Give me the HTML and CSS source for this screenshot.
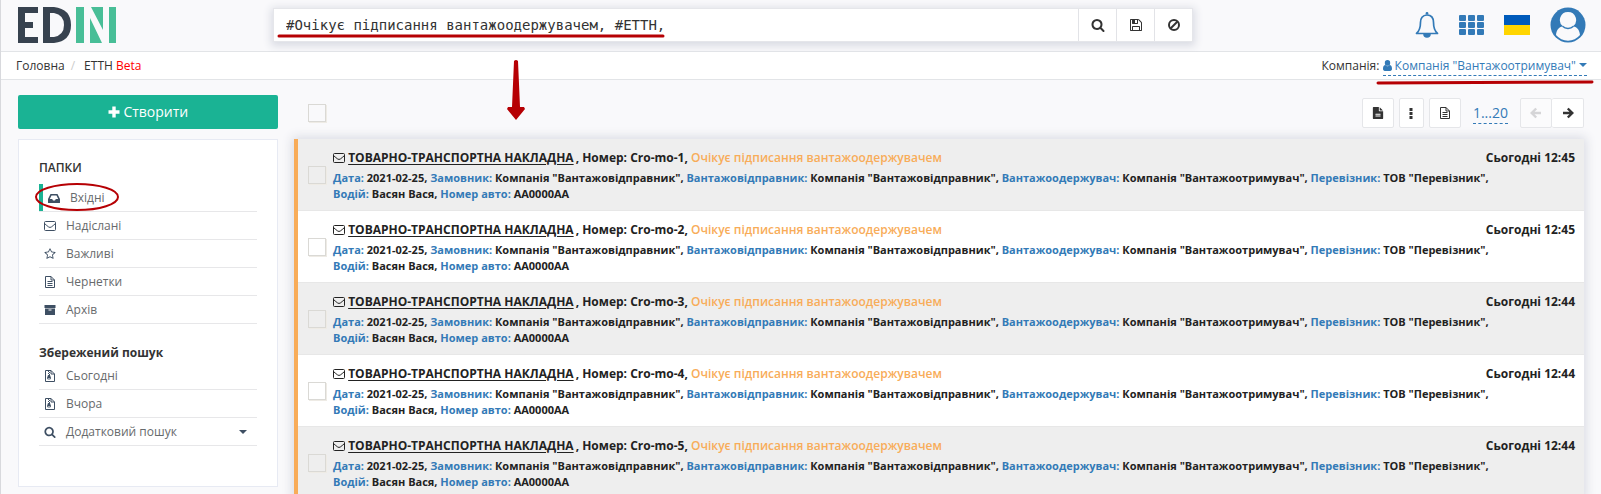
FILE: index.html
```html
<!DOCTYPE html>
<html lang="uk">
<head>
<meta charset="utf-8">
<title>EDIN — ЕТТН</title>
<link rel="stylesheet" href="styles.css">
<script src="app.js" defer></script>
</head>
<body>
<svg class="sprite" aria-hidden="true">
  <symbol id="i-search" viewBox="0 0 1792 1792"><path d="M1216 832q0-185-131.500-316.500t-316.500-131.500-316.500 131.500-131.500 316.500 131.500 316.500 316.500 131.500 316.500-131.500 131.500-316.500zm512 832q0 52-38 90t-90 38q-54 0-90-38l-343-342q-179 124-399 124-143 0-273.500-55.500t-225-150-150-225-55.500-273.500 55.500-273.500 150-225 225-150 273.500-55.500 273.500 55.500 225 150 150 225 55.500 273.500q0 220-124 399l343 343q37 37 37 90z"/></symbol>
  <symbol id="i-save" viewBox="0 0 1792 1792"><path d="M512 1536h768v-384h-768v384zm896 0h128v-896q0-14-10-38.500t-20-34.500l-281-281q-10-10-34-20t-39-10v416q0 40-28 68t-68 28h-576q-40 0-68-28t-28-68v-416h-128v1280h128v-416q0-40 28-68t68-28h832q40 0 68 28t28 68v416zm-384-928v-320q0-13-9.500-22.500t-22.500-9.500h-192q-13 0-22.500 9.500t-9.500 22.500v320q0 13 9.500 22.500t22.500 9.500h192q13 0 22.500-9.500t9.500-22.500zm640 32v928q0 40-28 68t-68 28h-1344q-40 0-68-28t-28-68v-1344q0-40 28-68t68-28h928q40 0 88 20t76 48l280 280q28 28 48 76t20 88z"/></symbol>
  <symbol id="i-ban" viewBox="0 0 14 14"><circle cx="7" cy="7" r="5" fill="none" stroke="currentColor" stroke-width="2"/><path d="M3.500 10.500l7-7" stroke="currentColor" stroke-width="2"/></symbol>
  <symbol id="i-bell" viewBox="0 0 24 28"><path d="M12 4c-4.600 0-6.500 3.400-6.500 7.300 0 5.700-1.500 9-4 11.200h21c-2.500-2.200-4-5.500-4-11.200C18.500 7.400 16.600 4 12 4z" fill="none" stroke="currentColor" stroke-width="1.700" stroke-linejoin="round"/><path d="M10.600 3.500V2.400a1.400 1.400 0 0 1 2.800 0v1.100zM8.200 23h7.600a3.800 3.800 0 0 1-7.600 0z"/></symbol>
  <symbol id="i-user" viewBox="0 0 10 12"><path d="M5 0a3 3.200 0 0 1 0 6.400A3 3.200 0 0 1 5 0zM2.300 5.400a3.800 3.800 0 0 0 5.400 0C9.400 5.700 10 7.500 10 9.700 10 11.200 9.200 12 8 12H2c-1.200 0-2-.8-2-2.300 0-2.200.6-4 2.300-4.300z"/></symbol>
  <symbol id="i-plus" viewBox="0 0 12 12"><path d="M4.300.5h3.400v3.800h3.800v3.400H7.700v3.800H4.300V7.700H.5V4.300h3.800z"/></symbol>
  <symbol id="i-doc" viewBox="0 0 1792 1792"><path d="M1596 476q14 14 28 36h-472v-472q22 14 36 28zm-476 164h544v1056q0 40-28 68t-68 28h-1344q-40 0-68-28t-28-68v-1600q0-40 28-68t68-28h800v544q0 40 28 68t68 28zm160 736v-64q0-14-9-23t-23-9h-704q-14 0-23 9t-9 23v64q0 14 9 23t23 9h704q14 0 23-9t9-23zm0-256v-64q0-14-9-23t-23-9h-704q-14 0-23 9t-9 23v64q0 14 9 23t23 9h704q14 0 23-9t9-23z"/></symbol>
  <symbol id="i-doc-o" viewBox="0 0 12 12"><path d="M1.500.5h5.500l3.500 3.500v7.500h-9zM7 .5V4h3.500M3.500 5.500h5M3.500 7.500h5M3.500 9.500h5" fill="none" stroke="currentColor" stroke-linejoin="round"/></symbol>
  <symbol id="i-zip" viewBox="0 0 12 12"><path d="M1.500.5h5.500l3.500 3.500v7.500h-9zM7 .5V4h3.500" fill="none" stroke="currentColor" stroke-linejoin="round"/><path d="M4 1h1v1H4zM5 2h1v1H5zM4 3h1v1H4zM5 4h1v1H5zM4 5h2l1 3a2 1.500 0 1 1-4 0zM4.300 8.200v.9h1.400v-.9z" fill-rule="evenodd"/></symbol>
  <symbol id="i-dots" viewBox="0 0 12 12"><path d="M4.500 1h3v3h-3zM4.500 5h3v3h-3zM4.500 9h3v3h-3z"/></symbol>
  <symbol id="i-right" viewBox="0 0 12 12"><path d="M1 6h9M5.800 1.500L10.300 6l-4.500 4.500" fill="none" stroke="currentColor" stroke-width="2.400"/></symbol>
  <symbol id="i-left" viewBox="0 0 12 12"><path d="M11 6H2M6.200 1.500L1.700 6l4.500 4.500" fill="none" stroke="currentColor" stroke-width="2.400"/></symbol>
  <symbol id="i-inbox" viewBox="0 0 12 12"><path d="M2.500 2h7L12 7v3.400q0 .6-.6.600H.6Q0 11 0 10.400V7zM3.500 3.400L1.800 7h2.400l.8 1.500h2L7.800 7h2.400L8.500 3.400z" fill-rule="evenodd"/></symbol>
  <symbol id="i-mail" viewBox="0 0 12 12"><path d="M1.500 1.500h9q1 0 1 1v7q0 1-1 1h-9q-1 0-1-1v-7q0-1 1-1zM.5 3.500q2.500 2.300 4.200 3.500 1.300.9 2.600 0 1.700-1.200 4.200-3.500" fill="none" stroke="currentColor"/></symbol>
  <symbol id="i-star" viewBox="0 0 1792 1792"><path d="M1201 1004l306-297-422-62-189-382-189 382-422 62 306 297-73 421 378-199 377 199zm527-357q0 22-26 48l-363 354 86 500q1 7 1 20 0 50-41 50-19 0-40-12l-449-236-449 236q-22 12-40 12-21 0-31.500-14.500t-10.500-35.500q0-6 2-20l86-500-364-354q-25-27-25-48 0-37 56-46l502-73 225-455q19-41 49-41t49 41l225 455 502 73q56 9 56 46z"/></symbol>
  <symbol id="i-archive" viewBox="0 0 12 12"><path d="M.5 1h11v3H.5zM1 4.600h10V11H1zM4.500 5.500v1h3v-1z" fill-rule="evenodd"/></symbol>
  <symbol id="i-caret" viewBox="0 0 8 4"><path d="M0 0h8L4 4z"/></symbol>
</svg>

<header class="topbar">
  <a class="logo" href="#" aria-label="EDIN">
    <svg width="98" height="36" viewBox="0 0 98 36"><g fill="#37424f"><path d="M0 0h20v6H7v9h8v6H7v9h13v6H0z"/><path d="M25 0h11q17 2 17 18T36 36H25zM32 6v24h4q10-2 10-12T36 6z" fill-rule="evenodd"/></g><g fill="#48be97"><path d="M58 0h8v36h-8zM91 0h7v36h-7zM73 0h12v23zM72 11l12 25H72z"/></g></svg>
  </a>
  <form class="search">
    <input class="search-input" type="text" aria-label="Пошук" value="#Очікує підписання вантажоодержувачем, #ЕТТН,">
    <button class="search-btn" type="button" aria-label="Шукати"><svg class="ico"><use href="#i-search"/></svg></button>
    <button class="search-btn" type="button" aria-label="Зберегти"><svg class="ico"><use href="#i-save"/></svg></button>
    <button class="search-btn" type="button" aria-label="Очистити"><svg class="ico"><use href="#i-ban"/></svg></button>
    <svg class="mark mark-search" viewBox="0 0 388 4"><path d="M2 2h384"/></svg>
  </form>
  <nav class="tools">
    <a href="#" aria-label="Сповіщення"><svg width="24" height="28"><use href="#i-bell"/></svg></a>
    <a href="#" aria-label="Сервіси"><svg width="25" height="20" viewBox="0 0 25 20"><path id="cell" d="M1 0h5q1 0 1 1v4q0 1-1 1H1Q0 6 0 5V1q0-1 1-1z"/><use href="#cell" x="9"/><use href="#cell" x="18"/><use href="#cell" y="7"/><use href="#cell" x="9" y="7"/><use href="#cell" x="18" y="7"/><use href="#cell" y="14"/><use href="#cell" x="9" y="14"/><use href="#cell" x="18" y="14"/></svg></a>
    <a href="#" aria-label="Українська"><svg width="26" height="20" viewBox="0 0 26 20"><path fill="#005bbb" d="M0 0h26v10H0z"/><path fill="#ffd500" d="M0 10h26v10H0z"/></svg></a>
    <a href="#" aria-label="Профіль"><svg width="36" height="36" viewBox="0 0 36 36"><circle cx="18" cy="18" r="17.500"/><path fill="#f9f9fb" d="M18 5a8 8 0 0 1 5 14.300c4.500.8 6.700 4.500 7 8.700a15.600 15.600 0 0 1-24 0c.3-4.200 2.500-7.900 7-8.700A8 8 0 0 1 18 5z"/><path fill="none" stroke="currentColor" stroke-width="1.500" d="M12.500 19.200a8 8 0 0 0 11 0"/></svg></a>
  </nav>
</header>

<div class="crumbs">
  <nav class="path"><a href="#">Головна</a><span class="slash">/</span><a href="#">ЕТТН <span class="beta">Beta</span></a></nav>
  <div class="company">Компанія: <a class="company-link" href="#"><svg class="user"><use href="#i-user"/></svg> Компанія "Вантажоотримувач" <svg class="caret"><use href="#i-caret"/></svg></a>
    <svg class="mark mark-company" viewBox="0 0 218 5"><path d="M2 3L216 2"/></svg>
  </div>
  <svg class="mark mark-arrow" viewBox="0 0 18 62"><path class="solid" d="M7 2q2-2 4 0l2 46h4l1 2-9 11-9-11 1-2h4z"/></svg>
</div>

<div class="layout">
  <aside class="side">
    <button class="create" type="button"><svg class="plus"><use href="#i-plus"/></svg> Створити</button>
    <div class="panel">
      <h2 class="side-title">ПАПКИ</h2>
      <ul class="menu">
        <li class="active"><a href="#"><svg class="ico12"><use href="#i-inbox"/></svg>Вхідні</a><svg class="mark mark-oval" viewBox="0 0 86 30"><ellipse cx="43" cy="15" rx="41" ry="13"/></svg></li>
        <li><a href="#"><svg class="ico12"><use href="#i-mail"/></svg>Надіслані</a></li>
        <li><a href="#"><svg class="ico12"><use href="#i-star"/></svg>Важливі</a></li>
        <li><a href="#"><svg class="ico12"><use href="#i-doc-o"/></svg>Чернетки</a></li>
        <li><a href="#"><svg class="ico12"><use href="#i-archive"/></svg>Архів</a></li>
      </ul>
      <h2 class="side-title saved">Збережений пошук</h2>
      <ul class="menu">
        <li><a href="#"><svg class="ico12"><use href="#i-zip"/></svg>Сьогодні</a></li>
        <li><a href="#"><svg class="ico12"><use href="#i-zip"/></svg>Вчора</a></li>
        <li><a href="#"><svg class="ico12"><use href="#i-search"/></svg>Додатковий пошук<svg class="caret more"><use href="#i-caret"/></svg></a></li>
      </ul>
    </div>
  </aside>

  <main class="content">
    <div class="toolbar">
      <input class="check" type="checkbox" aria-label="Вибрати всі">
      <div class="actions">
        <button class="btn" type="button" aria-label="Документ"><svg class="ico12"><use href="#i-doc"/></svg></button>
        <button class="btn slim" type="button" aria-label="Ще"><svg class="ico12"><use href="#i-dots"/></svg></button>
        <button class="btn" type="button" aria-label="Звіт"><svg class="ico12"><use href="#i-doc-o"/></svg></button>
        <a class="range" href="#">1...20</a>
        <div class="pager"><button class="btn" type="button" disabled aria-label="Назад"><svg class="ico12"><use href="#i-left"/></svg></button><button class="btn" type="button" aria-label="Вперед"><svg class="ico12"><use href="#i-right"/></svg></button></div>
      </div>
    </div>
    <div class="list" id="list"></div>
  </main>
</div>
</body>
</html>
```
FILE: app.js
```js
const docs = [
  { no: 1, time: '12:45' },
  { no: 2, time: '12:45' },
  { no: 3, time: '12:44' },
  { no: 4, time: '12:44' },
  { no: 5, time: '12:44' }
];
document.getElementById('list').innerHTML = docs.map(d => `
  <article class="row">
    <input class="check" type="checkbox" aria-label="Вибрати Cro-mo-${d.no}">
    <div class="body">
      <div class="head"><div><svg class="ico12"><use href="#i-mail"/></svg> <a class="doc" href="#">ТОВАРНО-ТРАНСПОРТНА НАКЛАДНА</a><b class="num">, Номер: Cro-mo-${d.no},</b> <span class="state">Очікує підписання вантажоодержувачем</span></div><time>Сьогодні ${d.time}</time></div>
      <p class="meta"><i>Дата:</i> 2021-02-25, <i>Замовник:</i> Компанія "Вантажовідправник", <i>Вантажовідправник:</i> Компанія "Вантажовідправник", <i>Вантажоодержувач:</i> Компанія "Вантажоотримувач", <i>Перевізник:</i> ТОВ "Перевізник",<br><i>Водій:</i> Васян Вася, <i>Номер авто:</i> AA0000AA</p>
    </div>
  </article>`).join('');
```
FILE: styles.css
```css
* { box-sizing: border-box; }
html { overflow: hidden; }
body { margin: 0; border-left: 1px solid #d8d9dd; background: #f9f9fb; color: #333; font: 12px/18px "Open Sans", "Noto Sans", sans-serif; min-height: 100vh; }
a { color: inherit; text-decoration: none; }
svg { fill: currentColor; }
button, input { font: inherit; color: inherit; }
.sprite { position: absolute; width: 0; height: 0; }
.ico { width: 14px; height: 14px; }
.ico12 { width: 12px; height: 12px; }
.caret { width: 8px; height: 4px; vertical-align: 3px; }

.mark { position: absolute; fill: none; stroke: #b60004; stroke-width: 3; stroke-linecap: round; pointer-events: none; }
.mark .solid { fill: #b60004; stroke: none; }
.mark-search { left: 3px; top: 25px; width: 388px; height: 4px; }
.mark-company { right: -7px; top: 23px; width: 218px; height: 5px; }
.mark-arrow { left: 506px; top: 7px; width: 18px; height: 62px; }
.mark-oval { left: -5px; top: -2px; width: 86px; height: 30px; }
.mark-oval { stroke-width: 2; }

.topbar { display: flex; align-items: center; height: 52px; padding: 0 15px 2px 17px; border-bottom: 1px solid #e2e4e7; }
.logo { display: flex; width: 255px; }
.search { position: relative; display: flex; flex: 0 1 920px; height: 34px; border: 1px solid #e5e6ea; background: #fff; box-shadow: 0 2px 8px 2px #d9dbe3; }
.search-input { flex: 1; min-width: 0; border: 0; padding: 0 12px; background: none; font: 14px "DejaVu Sans Mono", monospace; }
.search-btn { display: flex; align-items: center; justify-content: center; width: 38px; padding: 0; border: 0; border-left: 1px solid #e2e3e7; background: #fff; }
.tools { display: flex; align-items: center; gap: 20px; margin-left: auto; color: #337ab7; }
.tools a { display: flex; }

.crumbs { position: relative; display: flex; justify-content: space-between; height: 28px; padding: 5px 14px 0 15px; border-bottom: 1px solid #e2e4e7; background: #fff; }
.slash { padding: 0 9px 0 6px; color: #ccc; }
.beta { color: #f00; }
.company { position: relative; }
.company-link { display: inline-block; border-bottom: 1px dashed #337ab7; color: #337ab7; }
.user { width: 9px; height: 11px; vertical-align: -1px; }

.layout { display: flex; align-items: flex-start; gap: 16px; padding: 15px 17px 0; }
.side { flex: 0 0 260px; }
.create { display: block; width: 100%; height: 34px; border: 0; border-radius: 2px; background: #1ab394; color: #fff; font-size: 14px; }
.plus { width: 12px; height: 12px; vertical-align: -1px; }
.panel { margin-top: 10px; padding: 19px 20px 40px; border: 1px solid #e7eaf3; background: #fff; }
.side-title { margin: 0 0 7px; font-size: 12px; font-weight: 600; line-height: 18px; }
.saved { margin: 20px 0 0; font-weight: 700; }
.menu { margin: 0; padding: 0; list-style: none; color: #676a6c; }
.menu li { position: relative; border-bottom: 1px solid #e7e7e9; }
.menu a { display: flex; align-items: center; gap: 10px; height: 27px; padding: 0 10px 0 5px; }
.menu svg.ico12, .more { color: #3e4f63; }
.menu .active a { border-left: 4px solid #1ab394; }
.more { margin-left: auto; }

.content { flex: 1; min-width: 0; }
.toolbar { display: flex; align-items: center; justify-content: space-between; height: 44px; padding: 0 0 8px 14px; }
.check { appearance: none; flex: none; width: 18px; height: 18px; margin: 0; border: 1px solid #dad9d5; box-shadow: 1px 1px 0 #eeebe5; }
.actions { display: flex; align-items: center; gap: 5px; }
.btn { display: flex; align-items: center; justify-content: center; width: 32px; height: 30px; padding: 0; border: 1px solid #e5e6e9; border-radius: 2px; background: #fff; }
.btn.slim { width: 25px; }
.btn:disabled { color: #d5d5d7; background: #fbfbfc; }
.range { margin: 0 7px; border-bottom: 1px dashed #337ab7; color: #337ab7; font-size: 14px; line-height: 20px; }
.pager { display: flex; }
.pager .btn + .btn { border-left: 0; }

.list { border-left: 4px solid #f8ac59; box-shadow: 0 0 10px 2px #d9dbe3; color: #222; }
.row { display: flex; align-items: center; gap: 7px; height: 72px; padding: 1px 9px 0 10px; border-bottom: 1px solid #e7e7e7; background: #fff; }
.row:nth-child(odd) { background: #eee; }
.body { flex: 1; min-width: 0; }
.head { display: flex; justify-content: space-between; }
.head .ico12 { vertical-align: -2px; }
.doc, time { font-weight: 700; }
.doc { text-decoration: underline; text-underline-offset: 2px; }
.num { margin-left: 2px; }
.state { color: #f8ac59; font-weight: 600; }
.meta { margin: 3px 0 0; font-size: 11px; line-height: 16px; font-weight: 700; }
.meta i { color: #337ab7; font-style: normal; }
```
